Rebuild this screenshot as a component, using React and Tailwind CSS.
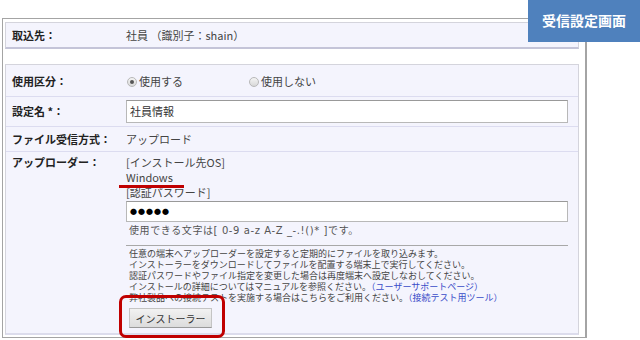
import React from "react";

const font = { fontFamily: '"Noto Sans CJK JP", "Noto Sans", sans-serif' };
const latin = { fontFamily: '"DejaVu Sans", "Noto Sans CJK JP", sans-serif' };

function Radio({ checked }) {
  return (
    <span className="inline-flex h-[10px] w-[10px] items-center justify-center rounded-full border border-[#b8b8b8] bg-gradient-to-b from-[#f4f4f4] to-[#d8d8d8]">
      {checked && <span className="h-[4px] w-[4px] rounded-full bg-[#555]" />}
    </span>
  );
}

export default function App() {
  return (
    <div className="relative h-[340px] w-[640px] overflow-hidden bg-white text-[#333]" style={font}>
      <div className="pl-[2px] pt-[18px]">
        <div className="h-[320px] w-[585px] border border-r-2 border-[#a4a4a4] pl-[2px] pr-[6px] pt-[3px]">
          {/* panel 1 */}
          <div className="flex h-[27px] items-center border border-b-2 border-[#d4d4dc] border-b-[#c4c4d8] bg-[#f4f4fd] text-[11px]">
            <div className="w-[120px] pl-[6px] font-bold text-[#222]">取込先：</div>
            <div className="text-[#444]">社員 （識別子：shain）</div>
          </div>
          <div className="h-[15px]" />
          {/* panel 2 */}
          <div className="h-[271px] border border-[#d4d4dc] border-b-2 border-b-[#dcdcec] bg-[#f4f4fd] text-[11px]">
            <div className="flex h-[32px] items-center border-b border-[#dcdcf0] pt-[2px]">
              <div className="w-[120px] pl-[6px] font-bold text-[#222]">使用区分：</div>
              <div className="flex w-[123px] items-center gap-[2px] pl-[1px] text-[#444]">
                <Radio checked />
                <span>使用する</span>
              </div>
              <div className="flex items-center gap-[2px] text-[#444]">
                <Radio />
                <span>使用しない</span>
              </div>
            </div>
            <div className="flex h-[30px] items-center border-b border-[#dcdcf0]">
              <div className="w-[120px] pl-[6px] font-bold text-[#222]">設定名 *：</div>
              <div className="flex h-[23px] w-[442px] items-center border border-[#b8b8b8] border-t-[#999] bg-white pl-[3px] text-[#333]">
                社員情報
              </div>
            </div>
            <div className="flex h-[25px] items-center border-b border-[#dcdcf0]">
              <div className="w-[120px] pl-[6px] font-bold text-[#222]">ファイル受信方式：</div>
              <div className="text-[#444]">アップロード</div>
            </div>
            <div className="flex pt-[3px]">
              <div className="w-[120px] pl-[6px] font-bold leading-[14px] text-[#222]">アップローダー：</div>
              <div className="w-[442px] text-[#444]">
                <div className="leading-[15px]">[インストール先OS]</div>
                <div className="leading-[15px]">Windows</div>
                <div className="leading-[14px]">[認証パスワード]</div>
                <div className="mt-[2px] flex h-[21px] items-center border border-[#b8b8b8] border-t-[#999] bg-white pl-[3px] text-[7px] tracking-[1px] text-black">
                  ●●●●●
                </div>
                <div className="mt-[2px] pl-[3px] text-[10px] leading-[14px] tracking-[0.6px] text-[#555]" style={latin}>
                  使用できる文字は[ 0-9 a-z A-Z _-.!()* ]です。
                </div>
                <div className="mt-[7px] border-t border-[#a8a8a8] pl-[3px] pt-[2px] text-[9px] leading-[11px] text-[#444]">
                  <div className="h-[11px]">任意の端末へアップローダーを設定すると定期的にファイルを取り込みます。</div>
                  <div className="h-[11px]">インストーラーをダウンロードしてファイルを配置する端末上で実行してください。</div>
                  <div className="h-[11px]">認証パスワードやファイル指定を変更した場合は再度端末へ設定しなおしてください。</div>
                  <div className="h-[11px]">
                    インストールの詳細についてはマニュアルを参照ください。
                    <span className="text-[#3a4cc8]">（ユーザーサポートページ）</span>
                  </div>
                  <div className="h-[11px]">
                    弊社製品への接続テストを実施する場合はこちらをご利用ください。
                    <span className="text-[#3a4cc8]">（接続テスト用ツール）</span>
                  </div>
                </div>
                <div className="mt-[5px] pl-[3px]">
                  <button className="flex h-[20px] w-[83px] items-center justify-center border border-[#c4c4c4] border-b-[#999] bg-gradient-to-b from-[#f2f2f2] to-[#dcdcdc] text-[10px] text-[#333]">
                    インストーラー
                  </button>
                </div>
              </div>
            </div>
          </div>
        </div>
      </div>

      {/* overlays */}
      <div className="absolute left-[528px] top-0 flex h-[42px] w-[112px] items-center justify-center bg-[#4f81bd] pb-[2px] text-[14px] font-bold text-white">
        受信設定画面
      </div>
      <div className="absolute left-[119px] top-[185px] h-[3px] w-[65px] bg-[#c00000]" />
      <div className="absolute left-[119px] top-[295px] h-[43px] w-[106px] rounded-[7px] border-[3px] border-[#c00000]" />
    </div>
  );
}
